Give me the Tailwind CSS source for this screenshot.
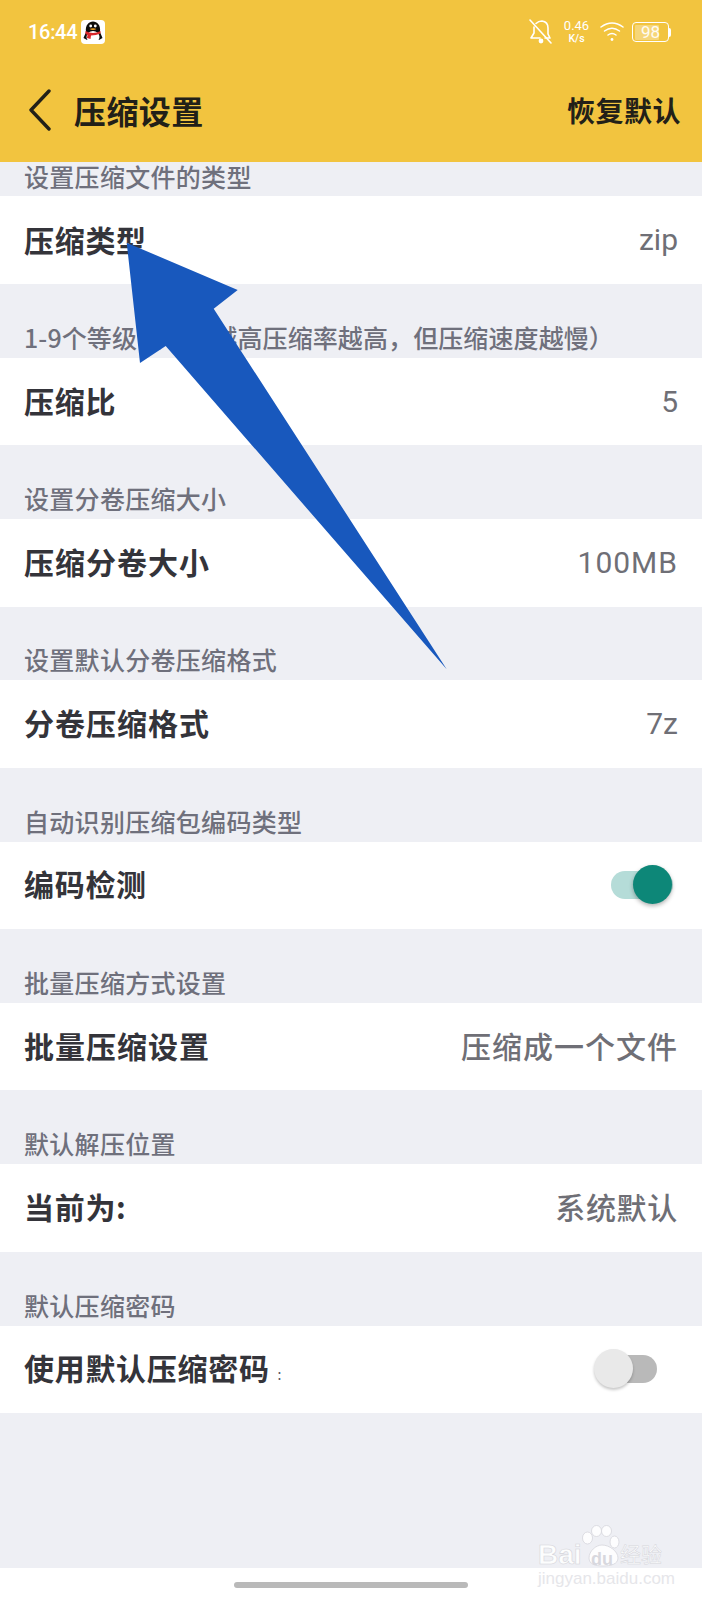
<!DOCTYPE html>
<html lang="zh-CN">
<head>
  <meta charset="UTF-8" />
  <title>压缩设置</title>
  <script src="https://cdn.jsdelivr.net/npm/@tailwindcss/browser@4"></script>
</head>
<body class="relative w-[702px] h-[1600px] overflow-hidden bg-[#eeeff4] font-['Noto_Sans_CJK_SC',sans-serif]">

  <!-- Header -->
  <header class="h-[162px] bg-[#f2c43f] flex flex-col">
    <div class="h-[64px] pl-[28px] pr-[31px] flex items-center justify-between text-white font-['Roboto',sans-serif]">
      <div class="flex items-center gap-[4px]">
        <span class="text-[20px] font-medium tracking-[-0.3px]">16:44</span>
        <svg width="24" height="24" viewBox="0 0 24 24">
          <rect width="24" height="24" rx="4" fill="#fff"/>
          <path d="M5 12 C4 5 8 1.5 12 1.5 C16 1.5 20 5 19 12 L21.5 18 L18 20 L6 20 L2.5 18 Z" fill="#0d0d0d"/>
          <ellipse cx="12" cy="17" rx="6.5" ry="6" fill="#fff"/>
          <path d="M4.5 11 Q12 15 19.5 11 L19.5 13.5 Q15 15.5 10 15.5 L9.5 19 L6 18 L6.5 15 L4.5 14 Z" fill="#d9262a"/>
          <circle cx="9.7" cy="6" r="1.4" fill="#fff"/>
          <circle cx="14.3" cy="6" r="1.4" fill="#fff"/>
          <path d="M8.5 9 Q12 7.4 15.5 9 Q12 11 8.5 9 Z" fill="#f5a623"/>
        </svg>
      </div>
      <div class="flex items-center">
        <svg width="24" height="26" viewBox="0 0 24 26" fill="none" stroke="#fff" stroke-width="1.6" stroke-linecap="round" stroke-linejoin="round" class="mr-[11px]">
          <path d="M1 1 L22 24"/>
          <path d="M7 4.5 C9 2.5 11 2 13 2 C17 2.5 19 5.5 19 9 L19 15 L21 19 L16 19 M11 19 L2 19 L5 14 L5 8"/>
          <circle cx="12" cy="22" r="1.6" fill="#fff"/>
        </svg>
        <div class="w-[25px] flex flex-col items-center leading-none mr-[11px]">
          <span class="text-[13px] leading-[14px]">0.46</span>
          <span class="text-[10.5px] font-medium leading-[12px]">K/s</span>
        </div>
        <svg width="24" height="22" viewBox="0 0 24 22" fill="none" stroke="#fff" stroke-width="1.5" stroke-linecap="round" class="mr-[8px]">
          <path d="M1 6 Q12 -2 23 6"/>
          <path d="M4.5 10 Q12 4.5 19.5 10"/>
          <path d="M8 14 Q12 11 16 14"/>
          <circle cx="12" cy="18.5" r="1.4" fill="#fff" stroke="none"/>
        </svg>
        <div class="flex items-center">
          <div class="w-[37px] h-[20px] border-[1.5px] border-white rounded-[4px] p-[1.5px] relative">
            <div class="h-full w-[75%] bg-white/30 rounded-[1px]"></div>
            <span class="absolute inset-0 flex items-center justify-center text-[17px] text-white/90 leading-none">98</span>
          </div>
          <div class="w-[2px] h-[9px] bg-white rounded-r-[2px]"></div>
        </div>
      </div>
    </div>
    <div class="mt-[14px] h-[64px] pl-[28px] pr-[21px] flex items-center justify-between text-[#222018]">
      <div class="flex items-center">
        <svg width="24" height="42" viewBox="0 0 24 42" fill="none" stroke="#222018" stroke-width="3.4" stroke-linecap="round" stroke-linejoin="round">
          <path d="M21 2 L3 21 L21 40"/>
        </svg>
        <h1 class="ml-[22px] text-[32px] font-bold leading-none tracking-[0.4px]">压缩设置</h1>
      </div>
      <span class="text-[28px] font-bold leading-none tracking-[0.5px]">恢复默认</span>
    </div>
  </header>

  <main>
    <div class="h-[34px] pl-[24px] pb-[5px] flex items-center text-[25px] font-medium leading-none tracking-[0.3px] text-[#6f707c]">设置压缩文件的类型</div>
    <div class="h-[88px] bg-white px-[24px] flex items-center justify-between text-[30px] leading-none">
      <span class="pb-[3px] font-bold text-[#34343a] tracking-[0.7px]">压缩类型</span>
      <span class="text-[#6f6f76] font-['Roboto',sans-serif]">zip</span>
    </div>

    <div class="h-[73.8px] pl-[24px] pb-[8px] flex items-end text-[25px] font-medium leading-none tracking-[0.1px] text-[#6f707c]">1-9个等级（等级越高压缩率越高，但压缩速度越慢）</div>
    <div class="h-[87.5px] bg-white px-[24px] flex items-center justify-between text-[30px] leading-none">
      <span class="pb-[4px] font-bold text-[#34343a] tracking-[0.7px]">压缩比</span>
      <span class="text-[#6f6f76] font-['Roboto',sans-serif]">5</span>
    </div>

    <div class="h-[73.8px] pl-[24px] pb-[8px] flex items-end text-[25px] font-medium leading-none tracking-[0.3px] text-[#6f707c]">设置分卷压缩大小</div>
    <div class="h-[87.5px] bg-white px-[24px] flex items-center justify-between text-[30px] leading-none">
      <span class="pb-[4px] font-bold text-[#34343a] tracking-[1px]">压缩分卷大小</span>
      <span class="text-[#6f6f76] font-['Roboto',sans-serif] tracking-[1px]">100MB</span>
    </div>

    <div class="h-[73.8px] pl-[24px] pb-[8px] flex items-end text-[25px] font-medium leading-none tracking-[0.3px] text-[#6f707c]">设置默认分卷压缩格式</div>
    <div class="h-[87.5px] bg-white px-[24px] flex items-center justify-between text-[30px] leading-none">
      <span class="pb-[4px] font-bold text-[#34343a] tracking-[1px]">分卷压缩格式</span>
      <span class="text-[#6f6f76] font-['Roboto',sans-serif]">7z</span>
    </div>

    <div class="h-[73.8px] pl-[24px] pb-[8px] flex items-end text-[25px] font-medium leading-none tracking-[0.3px] text-[#6f707c]">自动识别压缩包编码类型</div>
    <div class="h-[87.5px] bg-white pl-[24px] pr-[29px] flex items-center justify-between text-[30px] leading-none">
      <span class="pb-[4px] font-bold text-[#34343a] tracking-[0.7px]">编码检测</span>
      <div class="relative w-[62px] h-[28px] rounded-full bg-[#b5dcd8]">
        <div class="absolute right-[1px] top-[-6px] w-[39px] h-[39px] rounded-full bg-[#0d8778] shadow-[0_2px_4px_rgba(0,0,0,0.3)]"></div>
      </div>
    </div>

    <div class="h-[73.8px] pl-[24px] pb-[8px] flex items-end text-[25px] font-medium leading-none tracking-[0.3px] text-[#6f707c]">批量压缩方式设置</div>
    <div class="h-[87.5px] bg-white px-[24px] flex items-center justify-between text-[30px] leading-none">
      <span class="pb-[4px] font-bold text-[#34343a] tracking-[1px]">批量压缩设置</span>
      <span class="pb-[4px] text-[#6f6f76] font-medium tracking-[1px]">压缩成一个文件</span>
    </div>

    <div class="h-[73.8px] pl-[24px] pb-[8px] flex items-end text-[25px] font-medium leading-none tracking-[0.3px] text-[#6f707c]">默认解压位置</div>
    <div class="h-[87.5px] bg-white px-[24px] flex items-center justify-between text-[30px] leading-none">
      <span class="pb-[4px] font-bold text-[#34343a] tracking-[0.7px]">当前为:</span>
      <span class="pb-[4px] text-[#6f6f76] font-medium tracking-[0.7px]">系统默认</span>
    </div>

    <div class="h-[73.8px] pl-[24px] pb-[8px] flex items-end text-[25px] font-medium leading-none tracking-[0.3px] text-[#6f707c]">默认压缩密码</div>
    <div class="h-[87.5px] bg-white pl-[24px] pr-[45px] flex items-center justify-between text-[30px] leading-none">
      <span class="pb-[4px] font-bold text-[#34343a] tracking-[0.7px]">使用默认压缩密码<span class="ml-[8px] text-[14px] font-normal text-[#55555c]">:</span></span>
      <div class="relative w-[62px] h-[28px] rounded-full bg-[#b9b9b9]">
        <div class="absolute left-[-1px] top-[-6px] w-[39px] h-[39px] rounded-full bg-[#e9e9e9] shadow-[0_2px_3px_rgba(0,0,0,0.22)]"></div>
      </div>
    </div>
  </main>

  <!-- Gesture bar area -->
  <div class="absolute left-0 right-0 bottom-0 h-[32px] bg-white flex justify-center">
    <div class="mt-[13.5px] w-[234px] h-[6px] rounded-full bg-[#b9b9b9]"></div>
  </div>

  <!-- Arrow drawn over the page -->
  <svg class="absolute left-0 top-0 pointer-events-none" width="702" height="1600" viewBox="0 0 702 1600">
    <polygon points="126.7,242.7 237.7,290 213.7,308.7 446.7,669.3 165.7,346 140,363" fill="#1858bd"/>
  </svg>

  <!-- Baidu watermark -->
  <div class="absolute left-[538px] top-[1525px] w-[128px] h-[60px] font-['Liberation_Sans',sans-serif]">
    <svg class="absolute left-[44px] top-0" width="42" height="44" viewBox="0 0 42 44" fill="#ffffff" fill-opacity="0.85" stroke="#d6d6dc" stroke-width="0.8">
      <ellipse cx="5.5" cy="13" rx="5" ry="6"/>
      <ellipse cx="14.5" cy="6" rx="5" ry="5.5"/>
      <ellipse cx="24.5" cy="6" rx="5" ry="5.5"/>
      <ellipse cx="32.5" cy="17" rx="4.5" ry="6"/>
      <path d="M20 20 C14 20 7 26 7 33 C7 39 13 41 21 41 C29 41 36 39 36 33 C36 26 27 20 20 20 Z"/>
    </svg>
    <span class="absolute left-0 top-[16px] text-[28px] font-bold leading-none text-white/85 [-webkit-text-stroke:0.6px_#d4d4da]">Bai</span>
    <span class="absolute left-[53px] top-[25px] text-[18px] font-bold leading-none text-[#d8d8de]">du</span>
    <span class="absolute left-[82px] top-[18px] text-[21px] leading-none font-['Noto_Sans_CJK_SC',sans-serif] text-white/85 [-webkit-text-stroke:0.5px_#d4d4da]">经验</span>
    <span class="absolute left-0 top-[45px] text-[17px] leading-none text-[#e6e6ea]">jingyan.baidu.com</span>
  </div>

</body>
</html>
